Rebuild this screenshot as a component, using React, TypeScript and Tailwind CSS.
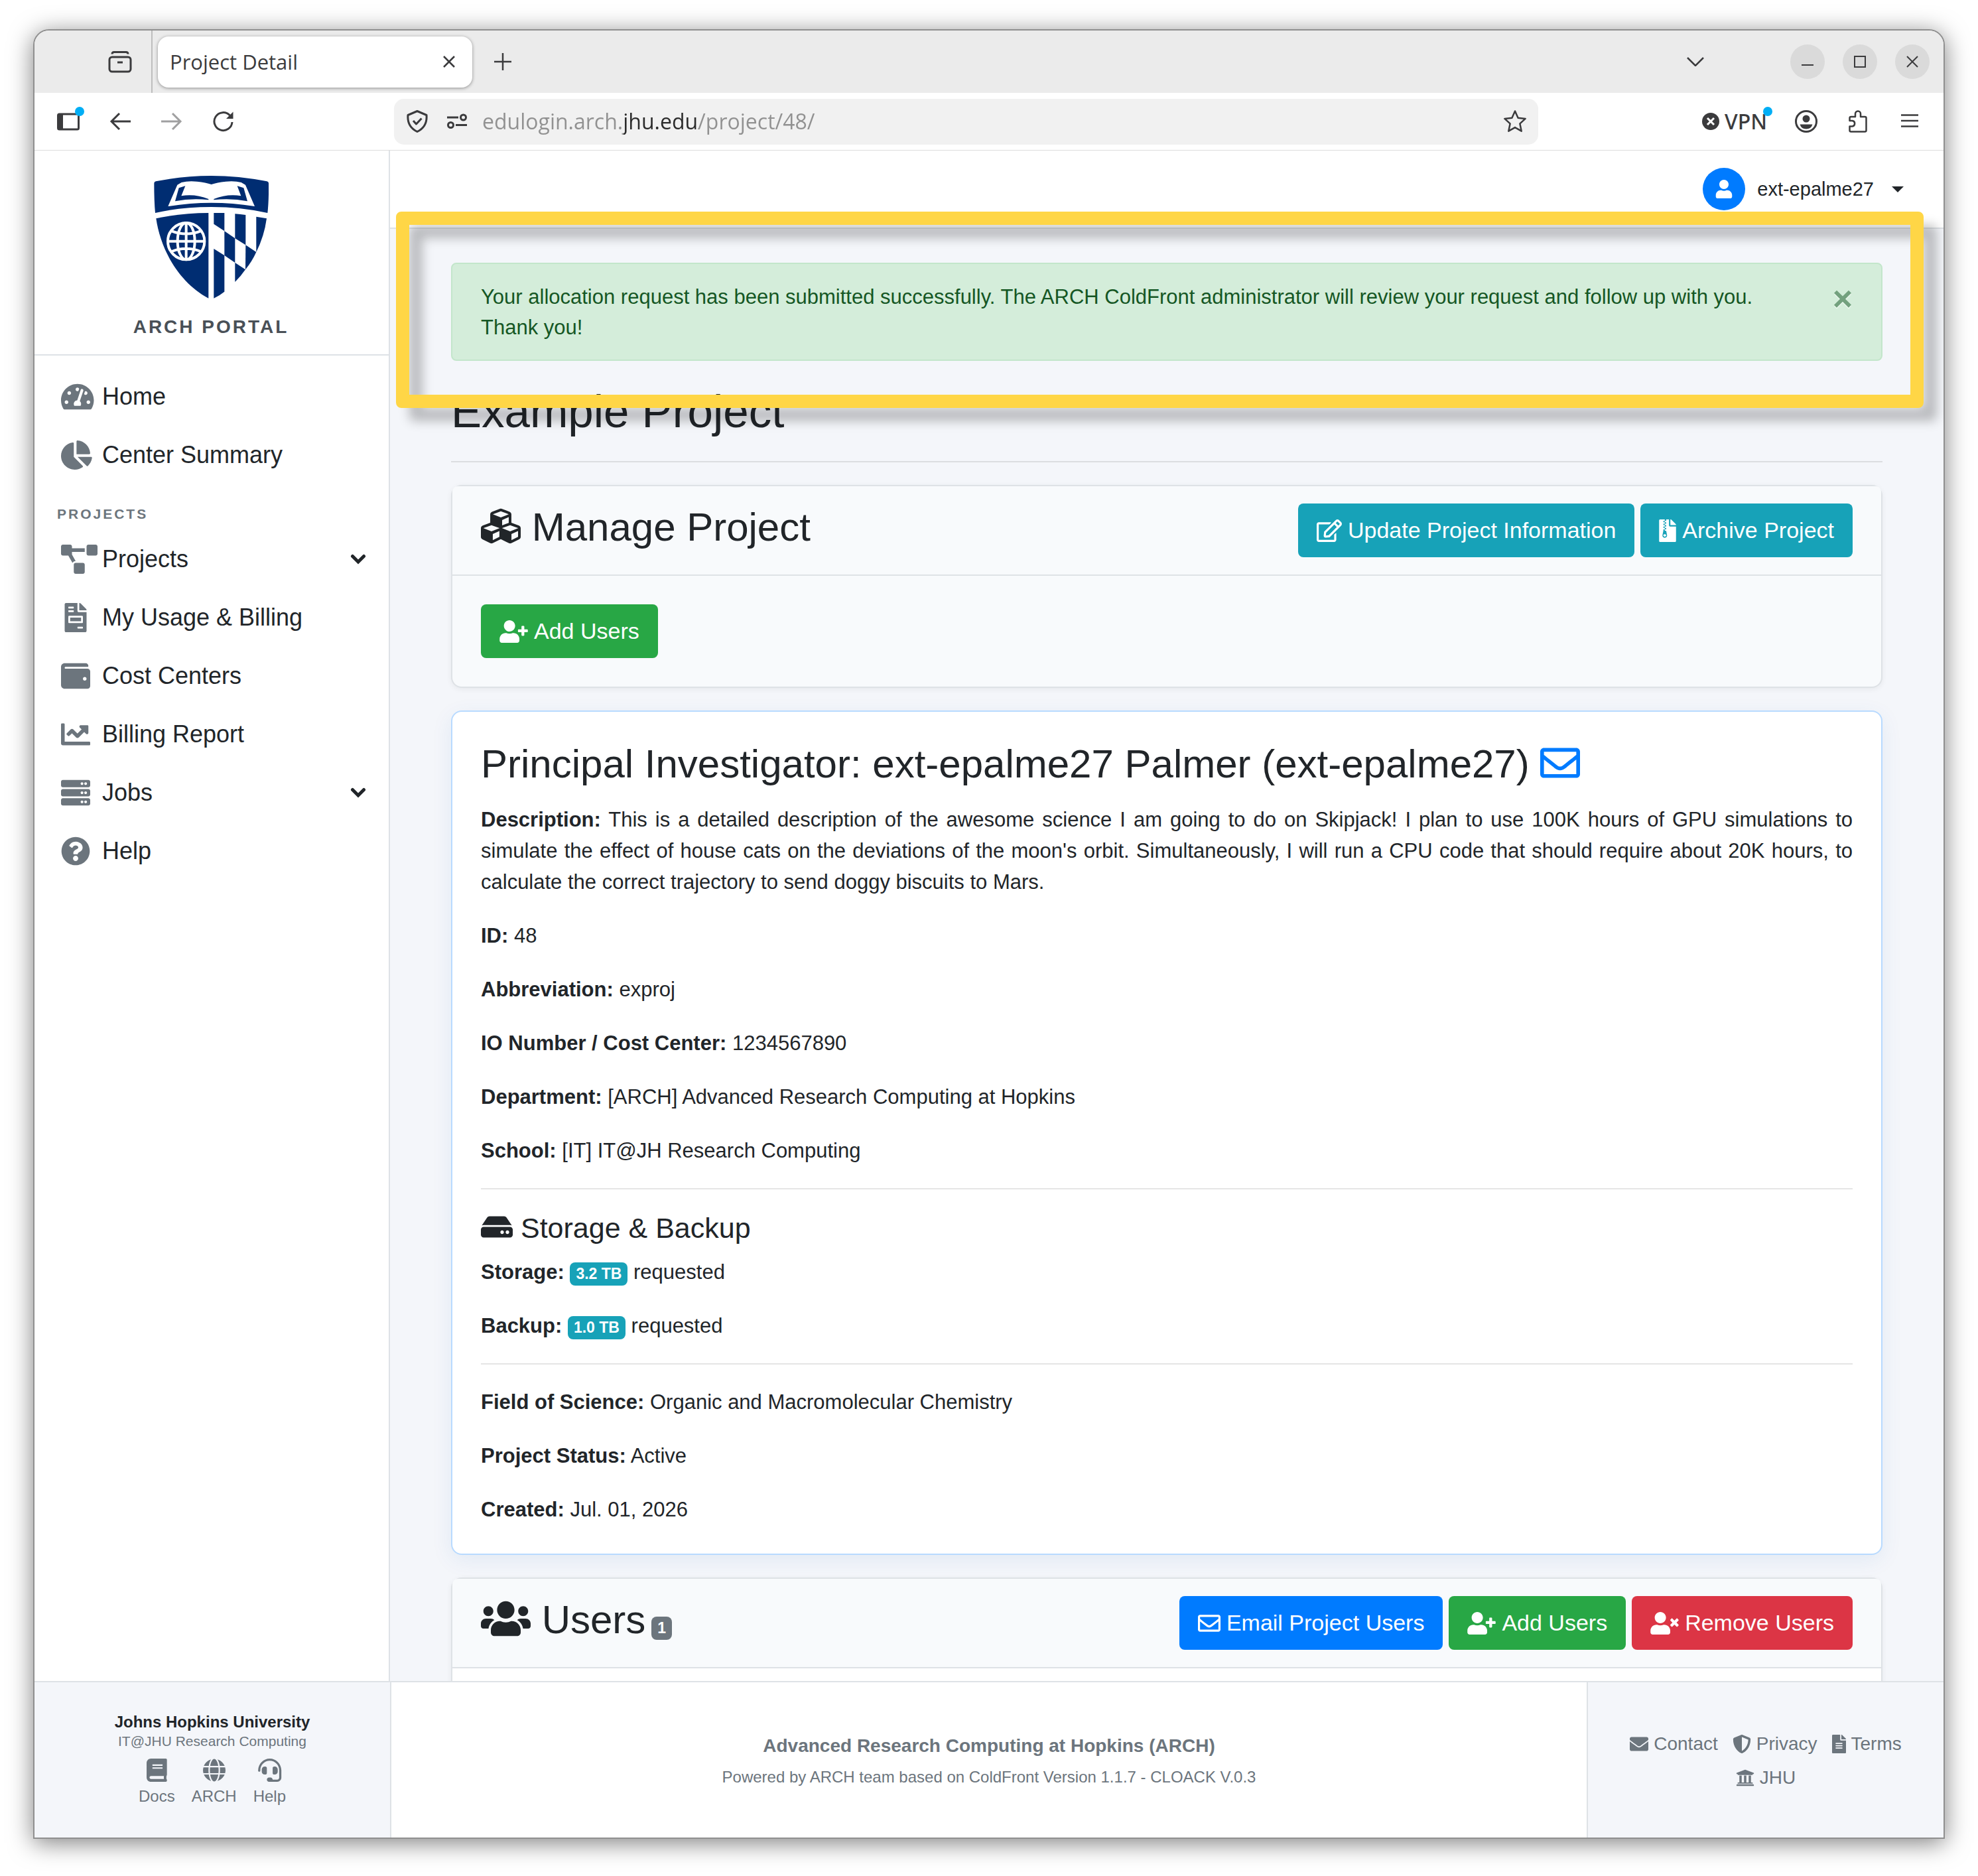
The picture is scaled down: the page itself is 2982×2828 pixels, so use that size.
import type { ReactNode } from "react";
import type { IconType } from "react-icons";
import {
  FaBook,
  FaChartLine,
  FaChartPie,
  FaCubes,
  FaEnvelope,
  FaFileAlt,
  FaFileArchive,
  FaFileInvoice,
  FaGlobe,
  FaHdd,
  FaHeadset,
  FaProjectDiagram,
  FaQuestionCircle,
  FaRegEdit,
  FaRegEnvelope,
  FaServer,
  FaShieldAlt,
  FaTachometerAlt,
  FaUniversity,
  FaUser,
  FaUserPlus,
  FaUserTimes,
  FaUsers,
  FaWallet,
} from "react-icons/fa";

type NavItem = { label: string; icon: IconType; expandable?: boolean };

const mainNav: NavItem[] = [
  { label: "Home", icon: FaTachometerAlt },
  { label: "Center Summary", icon: FaChartPie },
];

const projectNav: NavItem[] = [
  { label: "Projects", icon: FaProjectDiagram, expandable: true },
  { label: "My Usage & Billing", icon: FaFileInvoice },
  { label: "Cost Centers", icon: FaWallet },
  { label: "Billing Report", icon: FaChartLine },
  { label: "Jobs", icon: FaServer, expandable: true },
  { label: "Help", icon: FaQuestionCircle },
];

const details = [
  { label: "ID:", value: "48" },
  { label: "Abbreviation:", value: "exproj" },
  { label: "IO Number / Cost Center:", value: "1234567890" },
  { label: "Department:", value: "[ARCH] Advanced Research Computing at Hopkins" },
  { label: "School:", value: "[IT] IT@JH Research Computing" },
];

const status = [
  { label: "Field of Science:", value: "Organic and Macromolecular Chemistry" },
  { label: "Project Status:", value: "Active" },
  { label: "Created:", value: "Jul. 01, 2026" },
];

const footerApps = [
  { label: "Docs", icon: FaBook },
  { label: "ARCH", icon: FaGlobe },
  { label: "Help", icon: FaHeadset },
];

const footerLinks = [
  { label: "Contact", icon: FaEnvelope },
  { label: "Privacy", icon: FaShieldAlt },
  { label: "Terms", icon: FaFileAlt },
  { label: "JHU", icon: FaUniversity },
];

const buttonTone = {
  info: "bg-[#17a2b8]",
  success: "bg-[#28a745]",
  primary: "bg-[#007bff]",
  danger: "bg-[#dc3545]",
};

// Font Awesome glyphs differ in width at the same height
const iconWidth = {
  narrow: "w-[26px]",
  square: "w-[34px]",
  wide: "w-[38px]",
  extraWide: "w-[43px]",
};

/* ---------- browser chrome ---------- */

function ChromeButton({ label, children }: { label: string; children: ReactNode }) {
  return (
    <button aria-label={label} className="relative flex size-[38px] shrink-0 items-center justify-center text-[#3b3b3d]">
      {children}
    </button>
  );
}

function WindowButton({ label, children }: { label: string; children: ReactNode }) {
  return (
    <button aria-label={label} className="flex size-[52px] items-center justify-center rounded-full bg-[#dadada] text-[#3b3b3d]">
      <svg viewBox="0 0 18 18" className="size-[18px]" fill="none" stroke="currentColor" strokeWidth="2">
        {children}
      </svg>
    </button>
  );
}

function TabBar() {
  return (
    <div className="flex h-[94px] shrink-0 items-center bg-[#ebebeb] text-[#3b3b3d]">
      <div className="flex h-full w-[178px] items-center justify-end border-r-2 border-[#bdbdbd] pr-[28px]">
        <ChromeButton label="View tabs">
          <svg viewBox="0 0 38 38" className="size-[38px]" fill="none" stroke="currentColor" strokeWidth="3">
            <rect x="3" y="12" width="32" height="22" rx="4" />
            <path d="M7 7.500q0-3 3-3h18q3 0 3 3" />
            <path d="M15 20h8" />
          </svg>
        </ChromeButton>
      </div>
      <div className="ml-[8px] flex h-[77px] w-[474px] items-center justify-between rounded-[16px] bg-white pr-[23px] pl-[18px] shadow-[0_1px_5px_rgba(0,0,0,0.4)]">
        <span className="font-['Open_Sans','Noto_Sans',sans-serif] text-[31px] leading-[40px]">Project Detail</span>
        <button aria-label="Close tab" className="flex size-[24px] items-center justify-center">
          <svg viewBox="0 0 18 18" className="size-[18px]" fill="none" stroke="currentColor" strokeWidth="2.500">
            <path d="M1 1l16 16M17 1L1 17" />
          </svg>
        </button>
      </div>
      <div className="ml-[27px] flex flex-1 items-center justify-between">
        <ChromeButton label="New tab">
          <svg viewBox="0 0 26 26" className="size-[26px]" stroke="currentColor" strokeWidth="2.500">
            <path d="M13 0v26M0 13h26" />
          </svg>
        </ChromeButton>
        <ChromeButton label="List all tabs">
          <svg viewBox="0 0 26 14" className="h-[14px] w-[26px]" fill="none" stroke="currentColor" strokeWidth="2.500">
            <path d="M1 1l12 12L25 1" />
          </svg>
        </ChromeButton>
      </div>
      <div className="ml-[124px] flex gap-[27px] pr-[21px]">
        <WindowButton label="Minimize"><path d="M0 14h18" /></WindowButton>
        <WindowButton label="Maximize"><path d="M1 1h16v16H1z" /></WindowButton>
        <WindowButton label="Close"><path d="M1 1l16 16M17 1L1 17" /></WindowButton>
      </div>
    </div>
  );
}

function AddressBar() {
  return (
    <div className="flex h-[87px] shrink-0 items-center border-b border-[#dcdcdc] bg-white">
      <div className="flex w-[542px] shrink-0 items-center gap-[40px] pl-[32px]">
        <ChromeButton label="Show sidebar">
          <svg viewBox="0 0 38 38" className="size-[38px] overflow-visible">
            <rect x="3.500" y="8" width="31" height="23" rx="2" fill="none" stroke="currentColor" strokeWidth="3" />
            <path d="M4 8h7v23H4z" fill="currentColor" />
            <circle cx="36" cy="4" r="7" fill="#00aef5" />
          </svg>
        </ChromeButton>
        <ChromeButton label="Back">
          <svg viewBox="0 0 32 28" className="h-[28px] w-[32px]" fill="none" stroke="currentColor" strokeWidth="3">
            <path d="M15 2L3 14l12 12M3 14h29" />
          </svg>
        </ChromeButton>
        <ChromeButton label="Forward">
          <svg viewBox="0 0 32 28" className="h-[28px] w-[32px]" fill="none" stroke="#a0a0a1" strokeWidth="3">
            <path d="M17 2l12 12-12 12M29 14H0" />
          </svg>
        </ChromeButton>
        <ChromeButton label="Reload">
          <svg viewBox="0 0 32 32" className="size-[32px]" fill="none" stroke="currentColor" strokeWidth="3">
            <path d="M29 17A13.500 13.500 0 1 1 25.500 7" />
            <path d="M30.500 1.500v10.500h-10.500z" fill="currentColor" stroke="none" />
          </svg>
        </ChromeButton>
      </div>
      <div className="flex h-[69px] flex-1 items-center rounded-[15px] bg-[#f1f1f1] px-[16px]">
        <ChromeButton label="Site protection">
          <svg viewBox="0 0 34 36" className="h-[36px] w-[34px]" fill="none" stroke="currentColor" strokeWidth="3" strokeLinejoin="round">
            <path d="M17 2.500L31 8.500Q32.500 26 17 33.500Q1.500 26 3 8.500z" />
            <path d="M11 17l4.500 5 8-8.500" />
          </svg>
        </ChromeButton>
        <div className="ml-[22px]">
          <ChromeButton label="Site permissions">
            <svg viewBox="0 0 32 24" className="h-[24px] w-[32px]" fill="none" stroke="currentColor" strokeWidth="3">
              <circle cx="25.500" cy="6" r="4" />
              <path d="M1 6h17" />
              <circle cx="6.500" cy="17.500" r="4" />
              <path d="M14 17.500h17" />
            </svg>
          </ChromeButton>
        </div>
        {/* the registered domain is darker than the rest of the address */}
        <input
          aria-label="Address"
          defaultValue="edulogin.arch.jhu.edu/project/48/"
          className="ml-[19px] min-w-0 flex-1 bg-[linear-gradient(90deg,#919191_213px,#2b2b2b_213px,#2b2b2b_326px,#919191_326px)] bg-clip-text font-['Open_Sans','Noto_Sans',sans-serif] text-[32px] leading-[44px] text-transparent outline-none"
        />
        <ChromeButton label="Bookmark this page">
          <svg viewBox="0 0 36 36" className="size-[36px]" fill="none" stroke="currentColor" strokeWidth="2.500" strokeLinejoin="round">
            <path d="M18 2.500l4.600 10.200 11 1.200-8.200 7.500 2.300 11.300-9.700-5.600-9.700 5.600 2.300-11.300-8.200-7.500 11-1.200z" />
          </svg>
        </ChromeButton>
      </div>
      <div className="flex w-[611px] shrink-0 items-center justify-end gap-[40px] pr-[32px]">
        <button className="relative flex items-center gap-[8px] text-[#3b3b3d]">
          <svg viewBox="0 0 26 26" className="size-[26px]">
            <circle cx="13" cy="13" r="13" fill="currentColor" />
            <path d="M8 8l10 10M18 8L8 18" stroke="#fff" strokeWidth="3" />
          </svg>
          <span className="font-['Noto_Sans','Open_Sans',sans-serif] text-[32px] leading-[40px] font-medium">VPN</span>
          <span className="absolute -top-[2px] -right-[8px] size-[14px] rounded-full bg-[#00aef5]" />
        </button>
        <ChromeButton label="Account">
          <svg viewBox="0 0 36 36" className="size-[36px]">
            <circle cx="18" cy="18" r="15.500" fill="none" stroke="currentColor" strokeWidth="3" />
            <circle cx="18" cy="14" r="5.500" fill="currentColor" />
            <path d="M8.500 22.500h19q-2 7-9.500 7t-9.500-7z" fill="currentColor" />
          </svg>
        </ChromeButton>
        <ChromeButton label="Extensions">
          <svg viewBox="0 0 28 34" className="h-[34px] w-[28px]" fill="none" stroke="currentColor" strokeWidth="2.500" strokeLinejoin="round">
            <path d="M1.500 16v-4q0-2 2-2H10V5.500a4 4 0 0 1 8 0V10h6.500q2 0 2 2v18.500q0 2-2 2h-21q-2 0-2-2v-6h4a4.300 4.300 0 0 0 0-8.500z" />
          </svg>
        </ChromeButton>
        <ChromeButton label="Application menu">
          <svg viewBox="0 0 26 22" className="h-[22px] w-[26px]" stroke="currentColor" strokeWidth="2.500">
            <path d="M0 1.500h26M0 10h26M0 18.500h26" />
          </svg>
        </ChromeButton>
      </div>
    </div>
  );
}

/* ---------- sidebar ---------- */

function ShieldLogo() {
  return (
    <svg viewBox="65 75 519 555" className="h-[185px] w-[173px]" role="img" aria-label="Johns Hopkins shield">
      <g fill="#002d72">
        <path d="M66 109q0-7 8-9Q200 75 324 75t252 25q8 2 8 9v50q-1 50-5 84Q460 216 325 216T71 243Q66 190 66 109z" />
        <path d="M75 268Q190 243 312 243V629C180 560 95 410 75 268z" />
        <path d="M336 243h48v82l-48-32z" />
        <path d="M336 405l48 30v164q-22 18-48 30z" />
        <path d="M384 325l48 33v110l-48-33z" />
        <path d="M432 247q24 2 48 5v136l-48-30z" />
        <path d="M480 388l48 32q-19 42-49 79z" />
        <path d="M432 468l47 31q-22 32-47 56z" />
        <path d="M528 260l47 8q-11 81-47 152z" />
      </g>
      <path
        fill="#fff"
        d="M171 116l19-11q30-8 70-4 40 4 65 13 25-9 65-13 40-4 70 4l19 11 42 97Q420 197 325 197T129 213z"
      />
      <g fill="#002d72">
        <path d="M207 121l-29 9-17 60q75-15 151-6v-4q-60-24-123-14z" />
        <path d="M442 121l29 9 17 60q-75-15-152-6v-4q60-24 123-14z" />
      </g>
      <g fill="none" stroke="#fff" strokeWidth="12">
        <circle cx="211" cy="371" r="83" />
        <ellipse cx="211" cy="371" rx="39" ry="83" />
        <path d="M211 288v166M128 371h166M146 325q65 25 130 0M146 417q65-25 130 0" />
      </g>
    </svg>
  );
}

function SidebarItem({ label, icon: Icon, expandable }: NavItem) {
  return (
    <a href="#" className="flex h-[88px] items-center pr-[34px] pl-[40px]">
      <span className="flex w-[62px] shrink-0 text-[#6c757d]">
        <span className="flex min-w-[44px] justify-center">
          <Icon size="auto" className="h-[44px] max-w-none" />
        </span>
      </span>
      <span className="flex-1 text-[36px] leading-[54px]">{label}</span>
      {expandable && (
        <svg viewBox="0 0 24 16" className="h-[16px] w-[24px]" fill="none" stroke="currentColor" strokeWidth="5" strokeLinecap="round">
          <path d="M3.500 3.500L12 12l8.500-8.500" />
        </svg>
      )}
    </a>
  );
}

function Sidebar() {
  return (
    <aside className="w-[536px] shrink-0 border-r-2 border-[#dee2e6] bg-white">
      <div className="flex h-[309px] flex-col items-center border-b-2 border-[#dee2e6] pt-[38px] pr-[2px]">
        <ShieldLogo />
        <p className="mt-[22px] text-[28px] leading-[42px] font-bold tracking-[3px] text-[#495057]">ARCH PORTAL</p>
      </div>
      <nav className="pt-[18px]">
        {mainNav.map((item) => (
          <SidebarItem key={item.label} {...item} />
        ))}
        <h6 className="flex h-[69px] items-center pt-[20px] pl-[34px] text-[21px] font-bold tracking-[3px] text-[#6c757d]">
          PROJECTS
        </h6>
        {projectNav.map((item) => (
          <SidebarItem key={item.label} {...item} />
        ))}
      </nav>
    </aside>
  );
}

/* ---------- page content ---------- */

type ActionButtonProps = {
  tone: keyof typeof buttonTone;
  icon: IconType;
  size?: keyof typeof iconWidth;
  children: ReactNode;
};

function ActionButton({ tone, icon: Icon, size = "square", children }: ActionButtonProps) {
  return (
    <button
      className={`flex items-center gap-[9px] rounded-[8px] px-[28px] py-[15px] text-[34px] leading-[51px] whitespace-nowrap text-white ${buttonTone[tone]}`}
    >
      <Icon className={`h-[34px] shrink-0 ${iconWidth[size]}`} />
      {children}
    </button>
  );
}

function CardHeader({ title, actions }: { title: ReactNode; actions: ReactNode }) {
  return (
    <div className="flex items-start justify-between rounded-t-[8px] border-b-2 border-[#dee2e6] bg-[#f8fafc] px-[43px] py-[26px]">
      {title}
      <div className="flex gap-[9px]">{actions}</div>
    </div>
  );
}

function Badge({ className, children }: { className: string; children: ReactNode }) {
  return (
    <span className={`inline-block rounded-[8px] px-[9px] py-[6px] text-[23px] leading-[23px] font-bold text-white ${className}`}>
      {children}
    </span>
  );
}

function Field({ label, children }: { label: string; children: ReactNode }) {
  return (
    <p>
      <strong>{label}</strong> {children}
    </p>
  );
}

function SuccessAlert() {
  return (
    <div className="relative" role="alert">
      <div className="relative rounded-[8px] border-2 border-[#c3e6cb] bg-[#d4edda] pt-[27px] pr-[124px] pb-[25px] pl-[43px] leading-[46px] text-[#155724]">
        Your allocation request has been submitted successfully. The ARCH ColdFront administrator will review your
        request and follow up with you. Thank you!
        <button
          aria-label="Close"
          className="absolute top-[28px] right-[43px] text-[52px] leading-[48px] font-bold opacity-50 [text-shadow:0_2px_0_#fff]"
        >
          ×
        </button>
      </div>
      {/* highlight frame drawn over the alert */}
      <div className="pointer-events-none absolute -top-[77px] -right-[62px] -bottom-[71px] -left-[83px] z-20 drop-shadow-[20px_20px_8px_rgba(0,0,0,0.24)]">
        <div className="h-full rounded-[8px] border-[20px] border-[#ffd646]" />
      </div>
    </div>
  );
}

function ManageProjectCard() {
  return (
    <section className="rounded-[16px] border-2 border-[#dee2e6] bg-[#f8fafc] shadow-[0_2px_8px_rgba(0,0,0,0.06)]">
      <CardHeader
        title={
          <h2 className="text-[60px] leading-[72px]">
            <FaCubes className="inline size-[60px] align-[-0.125em]" /> Manage Project
          </h2>
        }
        actions={
          <>
            <ActionButton tone="info" icon={FaRegEdit} size="wide">Update Project Information</ActionButton>
            <ActionButton tone="info" icon={FaFileArchive} size="narrow">Archive Project</ActionButton>
          </>
        }
      />
      <div className="flex p-[43px]">
        <ActionButton tone="success" icon={FaUserPlus} size="extraWide">Add Users</ActionButton>
      </div>
    </section>
  );
}

function ProjectCard() {
  return (
    <section className="rounded-[16px] border-2 border-[#b8daff] bg-white p-[43px] shadow-[0_8px_32px_rgba(0,86,179,0.08)]">
      <h2 className="text-[60px] leading-[72px]">
        Principal Investigator: ext-epalme27 Palmer (ext-epalme27){" "}
        <a href="#" aria-label="Email investigator" className="text-[#007bff]">
          <FaRegEnvelope className="inline size-[60px] align-[-0.125em]" />
        </a>
      </h2>
      <div className="mt-[24px] flex flex-col gap-[34px]">
        <p className="text-justify">
          <strong>Description:</strong> This is a detailed description of the awesome science I am going to do on
          Skipjack! I plan to use 100K hours of GPU simulations to simulate the effect of house cats on the deviations
          of the moon's orbit. Simultaneously, I will run a CPU code that should require about 20K hours, to calculate
          the correct trajectory to send doggy biscuits to Mars.
        </p>
        {details.map((d) => (
          <Field key={d.label} label={d.label}>{d.value}</Field>
        ))}
      </div>
      <hr className="my-[33px] border-t-2 border-black/10" />
      <h4 className="text-[43px] leading-[50px]">
        <FaHdd className="inline h-[43px] w-[48px] align-[-0.125em]" /> Storage &amp; Backup
      </h4>
      <div className="mt-[18px] flex flex-col gap-[34px]">
        <Field label="Storage:"><Badge className="bg-[#17a2b8]">3.2 TB</Badge> requested</Field>
        <Field label="Backup:"><Badge className="bg-[#17a2b8]">1.0 TB</Badge> requested</Field>
      </div>
      <hr className="my-[33px] border-t-2 border-black/10" />
      <div className="flex flex-col gap-[34px]">
        {status.map((s) => (
          <Field key={s.label} label={s.label}>{s.value}</Field>
        ))}
      </div>
    </section>
  );
}

function UsersCard() {
  return (
    <section className="rounded-[16px] border-2 border-[#dee2e6] bg-white shadow-[0_2px_8px_rgba(0,0,0,0.06)]">
      <CardHeader
        title={
          <h2 className="text-[60px] leading-[72px]">
            <FaUsers className="inline h-[60px] w-[75px] align-[-0.125em]" /> Users
            <Badge className="ml-[9px] bg-[#6c757d]">1</Badge>
          </h2>
        }
        actions={
          <>
            <ActionButton tone="primary" icon={FaRegEnvelope}>Email Project Users</ActionButton>
            <ActionButton tone="success" icon={FaUserPlus} size="extraWide">Add Users</ActionButton>
            <ActionButton tone="danger" icon={FaUserTimes} size="extraWide">Remove Users</ActionButton>
          </>
        }
      />
      <div className="h-[200px]" />
    </section>
  );
}

function TopBar() {
  return (
    <header className="flex h-[118px] shrink-0 items-center justify-end border-b-2 border-[#dee2e6] bg-white pr-[60px]">
      <button className="flex items-center text-[29px] leading-[44px]">
        <span className="flex size-[64px] items-center justify-center rounded-full bg-[#007bff] text-white">
          <FaUser size="auto" className="h-[28px]" />
        </span>
        <span className="ml-[18px]">ext-epalme27</span>
        <svg viewBox="0 0 18 9" className="ml-[27px] h-[9px] w-[18px]" fill="currentColor">
          <path d="M0 0h18L9 9z" />
        </svg>
      </button>
    </header>
  );
}

function Footer() {
  return (
    <footer className="flex h-[236px] shrink-0 border-t-2 border-[#dee2e6] bg-white text-[#6c757d]">
      <div className="flex w-[538px] shrink-0 flex-col items-center justify-center border-r-2 border-[#dee2e6] bg-[#f4f6fa]">
        <strong className="text-[24px] leading-[29px] text-[#212529]">Johns Hopkins University</strong>
        <span className="text-[21px] leading-[30px]">IT@JHU Research Computing</span>
        <div className="mt-[11px] flex gap-[25px]">
          {footerApps.map(({ label, icon: Icon }) => (
            <a key={label} href="#" className="flex flex-col items-center gap-[4px] text-[24px] leading-[36px]">
              <Icon size="auto" className="h-[35px]" />
              {label}
            </a>
          ))}
        </div>
      </div>
      <div className="flex flex-1 flex-col items-center justify-center gap-[8px] pt-[2px] text-center">
        <strong className="text-[28px] leading-[42px]">Advanced Research Computing at Hopkins (ARCH)</strong>
        <span className="text-[24px] leading-[36px]">
          Powered by ARCH team based on ColdFront Version 1.1.7 - CLOACK V.0.3
        </span>
      </div>
      <div className="flex w-[538px] shrink-0 flex-wrap content-center justify-center gap-x-[22px] gap-y-[9px] border-l-2 border-[#dee2e6] bg-[#f4f6fa] px-[31px] pt-[2px] text-[28px] leading-[42px]">
        {footerLinks.map(({ label, icon: Icon }) => (
          <a key={label} href="#" className="flex items-center gap-[8px]">
            <Icon size="auto" className="h-[28px]" />
            {label}
          </a>
        ))}
      </div>
    </footer>
  );
}

export default function App() {
  return (
    <div className="h-screen overflow-hidden bg-white px-[50px] pt-[44px] pb-[56px] font-['Liberation_Sans',Arial,sans-serif] text-[31px] leading-[47px] text-[#212529]">
      <div className="flex h-full flex-col overflow-hidden rounded-t-[24px] border-2 border-[#8f8f8f] bg-white shadow-[0_6px_36px_rgba(0,0,0,0.5)]">
        <TabBar />
        <AddressBar />
        <div className="flex min-h-0 flex-1 overflow-hidden">
          <Sidebar />
          <div className="flex min-w-0 flex-1 flex-col bg-[#f4f6fa]">
            <TopBar />
            <main className="flex min-h-0 flex-1 flex-col px-[92px] pt-[51px]">
              <SuccessAlert />
              <h1 className="mt-[36px] text-[69px] leading-[82px]">Example Project</h1>
              <hr className="mt-[33px] mb-[34px] border-t-2 border-black/10" />
              <div className="flex flex-col gap-[34px]">
                <ManageProjectCard />
                <ProjectCard />
                <UsersCard />
              </div>
            </main>
          </div>
        </div>
        <Footer />
      </div>
    </div>
  );
}
